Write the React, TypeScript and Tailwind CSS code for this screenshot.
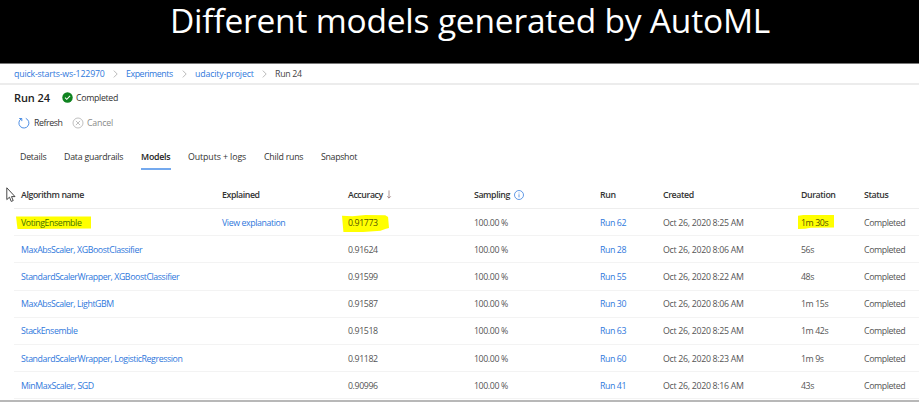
import type { ReactNode } from "react";

type Model = { name: string; score: string; run: string; time: string; duration: string };

const models: Model[] = [
  { name: "VotingEnsemble", score: "0.91773", run: "Run 62", time: "8:25", duration: "1m 30s" },
  { name: "MaxAbsScaler, XGBoostClassifier", score: "0.91624", run: "Run 28", time: "8:06", duration: "56s" },
  { name: "StandardScalerWrapper, XGBoostClassifier", score: "0.91599", run: "Run 55", time: "8:22", duration: "48s" },
  { name: "MaxAbsScaler, LightGBM", score: "0.91587", run: "Run 30", time: "8:06", duration: "1m 15s" },
  { name: "StackEnsemble", score: "0.91518", run: "Run 63", time: "8:25", duration: "1m 42s" },
  { name: "StandardScalerWrapper, LogisticRegression", score: "0.91182", run: "Run 60", time: "8:23", duration: "1m 9s" },
  { name: "MinMaxScaler, SGD", score: "0.90996", run: "Run 41", time: "8:16", duration: "43s" },
];

const columns = "grid grid-cols-[201px_126px_126px_126px_63px_138px_63px_1fr] items-center pl-[7px] ml-[14px]";

function Chevron() {
  return (
    <svg viewBox="0 0 5 8" className="h-[8px] w-[5px]" fill="none" stroke="#a8a8a8" strokeWidth="0.8">
      <path d="M0.8 0.6 4.2 4 0.8 7.4" />
    </svg>
  );
}

function Mark({ on, shape, path, children }: { on: boolean; shape: string; path: string; children: ReactNode }) {
  return (
    <span className="relative">
      {on && (
        <svg className={"absolute " + shape} preserveAspectRatio="none" viewBox="0 0 100 100" fill="#ffff00">
          <path d={path} />
        </svg>
      )}
      <span className="relative">{children}</span>
    </span>
  );
}

export default function App() {
  return (
    <div className="flex h-[402px] w-[919px] flex-col overflow-hidden whitespace-nowrap bg-white font-['Open_Sans','Noto_Sans',sans-serif] text-[8.8px] leading-[12px] text-[#333]">
      <header className="flex h-[64px] shrink-0 justify-center border-b border-[#777] bg-black pl-[21px]">
        <h1 className="text-[33.5px] leading-[40px] tracking-[-0.2px] text-white">Different models generated by AutoML</h1>
      </header>

      <nav className="flex h-[21px] shrink-0 items-center border-b-2 border-[#ececec] pl-[14px] text-[#2f78dc]">
        <a className="w-[99px] tracking-[-0.18px]">quick-starts-ws-122970</a>
        <Chevron />
        <a className="ml-[8px] w-[56px] tracking-[-0.42px]">Experiments</a>
        <Chevron />
        <a className="ml-[8px] w-[67px] tracking-[-0.17px]">udacity-project</a>
        <Chevron />
        <span className="ml-[8px] tracking-[-0.3px] text-[#444]">Run 24</span>
      </nav>

      <div className="flex h-[25px] shrink-0 items-center pl-[14px]">
        <h2 className="w-[48px] text-[11px] font-semibold tracking-[-0.08px] text-[#222]">Run 24</h2>
        <svg viewBox="0 0 12 12" className="h-[11px] w-[11px]">
          <circle cx="6" cy="6" r="5.7" fill="#0f8320" />
          <path d="M3.3 6.1 5.2 8 8.8 4.3" fill="none" stroke="#fff" strokeWidth="1.1" />
        </svg>
        <span className="ml-[3px] tracking-[-0.33px]">Completed</span>
      </div>

      <div className="flex h-[26px] shrink-0 items-center pl-[18px]">
        <svg viewBox="0 0 12 12" className="h-[12px] w-[12px]" fill="none" stroke="#3b82e0" strokeWidth="0.9">
          <path d="M7.8 1.4A5 5 0 1 1 3.4 1.7M1.2 1.5H3.8V4.1" />
        </svg>
        <span className="ml-[4px] w-[38px] tracking-[-0.42px]">Refresh</span>
        <svg viewBox="0 0 12 12" className="h-[12px] w-[12px]" fill="none" stroke="#b8b8b8" strokeWidth="0.9">
          <circle cx="6" cy="6" r="5" />
          <path d="M3.9 3.9 8.1 8.1M8.1 3.9 3.9 8.1" />
        </svg>
        <span className="ml-[3px] tracking-[-0.22px] text-[#8a8a8a]">Cancel</span>
      </div>

      <div className="mt-[7px] flex h-[27px] shrink-0 items-center pl-[20px] tracking-[-0.23px]">
        <span className="w-[44px]">Details</span>
        <span className="w-[77px]">Data guardrails</span>
        <span className="relative w-[47px] font-semibold text-[#222]">
          Models
          <i className="absolute top-[17px] left-0 h-[2px] w-[30px] bg-[#74a9ee]" />
        </span>
        <span className="w-[76px] tracking-[-0.1px]">Outputs + logs</span>
        <span className="w-[57px]">Child runs</span>
        <span className="tracking-[-0.32px]">Snapshot</span>
      </div>

      <main className="relative mt-[11px] tracking-[-0.41px]">
        <svg viewBox="0 0 10 16" className="absolute top-[6px] left-[6px] h-[16px] w-[10px]" fill="#fff" stroke="#333" strokeWidth="0.9">
          <path d="M0.8 0.8V12.6L3.5 10.2 5.2 14.4 7.2 13.6 5.5 9.6H9Z" />
        </svg>
        <div className={columns + " h-[28px] border-b border-[#eeeeee] font-semibold text-[#333]"}>
          <span>Algorithm name</span>
          <span>Explained</span>
          <span className="flex items-center gap-[3px]">
            Accuracy
            <svg viewBox="0 0 6 10" className="h-[9px] w-[6px]" fill="none" stroke="#8a6a6a" strokeWidth="0.8">
              <path d="M3 0.5V9M1 7 3 9 5 7" />
            </svg>
          </span>
          <span className="flex items-center gap-[4px]">
            Sampling
            <svg viewBox="0 0 10 10" className="h-[10px] w-[10px]" fill="none" stroke="#3b82e0" strokeWidth="0.8">
              <circle cx="5" cy="5" r="4.5" />
              <path d="M5 4.3V7.4M5 2.6V3.4" />
            </svg>
          </span>
          <span>Run</span>
          <span>Created</span>
          <span>Duration</span>
          <span>Status</span>
        </div>
        {models.map((m, i) => (
          <div key={m.name} className={columns + " h-[27.2px] border-b border-[#f3f3f3] pt-[1px] text-[#555]"}>
            <span className={i === 0 ? "text-[#3f7000]" : "text-[#2f78dc]"}>
              <Mark on={i === 0} shape="top-[-1px] left-[-5px] h-[13px] w-[75px]" path="M0 3H100V97L2 100Z">
                {m.name}
              </Mark>
            </span>
            <span className="text-[#2f78dc]">{i === 0 ? "View explanation" : ""}</span>
            <span className={i === 0 ? "text-[#555500]" : ""}>
              <Mark on={i === 0} shape="top-[-2px] left-[-6px] h-[17px] w-[47px]" path="M0 4 22 8 50 0 92 2 98 12 100 76 92 82 82 93 45 100H3Z">
                {m.score}
              </Mark>
            </span>
            <span>100.00 %</span>
            <span className="text-[#2f78dc]">{m.run}</span>
            <span className="tracking-[-0.3px]">Oct 26, 2020 {m.time} AM</span>
            <span className={i === 0 ? "text-[#555500]" : ""}>
              <Mark on={i === 0} shape="top-[-2px] left-[-3px] h-[14px] w-[36px]" path="M0 6 15 0H100V90L35 91 20 98 0 100Z">
                {m.duration}
              </Mark>
            </span>
            <span>Completed</span>
          </div>
        ))}
      </main>
      <div className="mt-auto h-[2px] shrink-0 bg-[#b8b8b8]" />
    </div>
  );
}
